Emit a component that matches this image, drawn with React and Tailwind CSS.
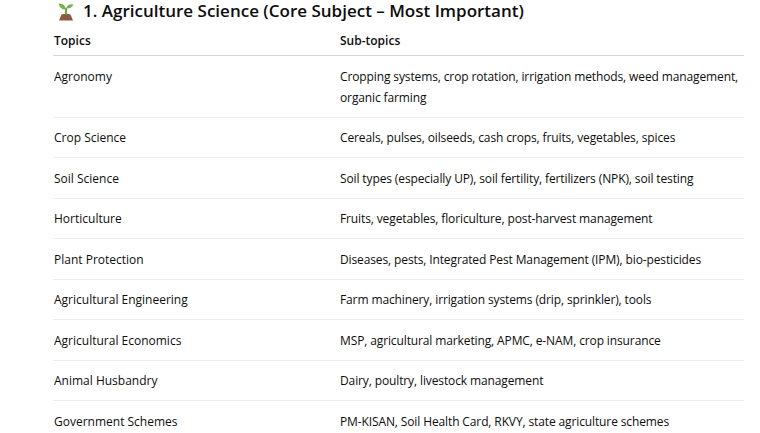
import React from "react";

const rows = [
  ["Agronomy", "Cropping systems, crop rotation, irrigation methods, weed management, organic farming"],
  ["Crop Science", "Cereals, pulses, oilseeds, cash crops, fruits, vegetables, spices"],
  ["Soil Science", "Soil types (especially UP), soil fertility, fertilizers (NPK), soil testing"],
  ["Horticulture", "Fruits, vegetables, floriculture, post-harvest management"],
  ["Plant Protection", "Diseases, pests, Integrated Pest Management (IPM), bio-pesticides"],
  ["Agricultural Engineering", "Farm machinery, irrigation systems (drip, sprinkler), tools"],
  ["Agricultural Economics", "MSP, agricultural marketing, APMC, e-NAM, crop insurance"],
  ["Animal Husbandry", "Dairy, poultry, livestock management"],
  ["Government Schemes", "PM-KISAN, Soil Health Card, RKVY, state agriculture schemes"],
];

// seedling emoji drawn by hand, no emoji font in the sandbox
const Seedling = () => (
  <svg width="20" height="20" viewBox="0 0 20 20" className="shrink-0">
    <path d="M3 19.5 L5.5 13.5 Q10 12 14.5 13.5 L17 19.5 Z" fill="#8a5a44" />
    <path d="M10 14 L10 7" stroke="#5c9e31" strokeWidth="1.8" fill="none" />
    <path d="M10 8.5 Q4 9 2.5 2.5 Q9 2 10 8.5 Z" fill="#77b255" />
    <path d="M10 7.5 Q15.5 8 17.5 3.5 Q12 2.5 10 7.5 Z" fill="#77b255" />
  </svg>
);

const App = () => {
  return (
    <div
      className="w-[760px] h-[433px] overflow-hidden bg-white text-[#0d0d0d]"
      style={{ fontFamily: '"Open Sans", "Noto Sans", sans-serif' }}
    >
      <div className="pl-[56px] pr-[16px]">
        <h3 className="flex items-center gap-[7px] h-[22px] text-[17px] font-semibold leading-[22px]">
          <Seedling />
          <span>1. Agriculture Science (Core Subject – Most Important)</span>
        </h3>
      </div>

      <div className="ml-[53px] w-[691px] mt-[3px] text-[12px]">
        <div className="grid grid-cols-[277px_1fr] border-b border-[#d6d6d6] font-semibold">
          <div className="pl-[1px] pt-[5px] pb-[3px] leading-[22px]">Topics</div>
          <div className="pl-[10px] pt-[5px] pb-[3px] leading-[22px]">Sub-topics</div>
        </div>
        {rows.map((r, i) => (
          <div
            key={i}
            className="grid grid-cols-[277px_1fr] border-b border-[#ececec] leading-[21px] pt-[9.5px] pb-[9px]"
          >
            <div className="pl-[1px]">{r[0]}</div>
            <div className="pl-[10px] tracking-[-0.12px]">{r[1]}</div>
          </div>
        ))}
      </div>
    </div>
  );
};

export default App;
